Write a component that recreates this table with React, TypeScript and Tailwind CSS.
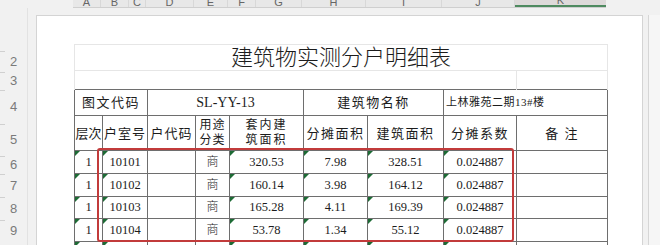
import React from 'react';

const colWidths = [28, 45, 48, 34, 74, 64, 76, 73, 91];

const letters = [
  { l: 'A', w: 28 },
  { l: 'B', w: 28 },
  { l: 'C', w: 17 },
  { l: 'D', w: 48 },
  { l: 'E', w: 34 },
  { l: 'F', w: 28 },
  { l: 'G', w: 46 },
  { l: 'H', w: 64 },
  { l: 'I', w: 76 },
  { l: 'J', w: 73 },
  { l: 'K', w: 91 },
];

const rowNums = [
  { n: 2, h: 21 },
  { n: 3, h: 18 },
  { n: 4, h: 34 },
  { n: 5, h: 32 },
  { n: 6, h: 18 },
  { n: 7, h: 23 },
  { n: 8, h: 23 },
  { n: 9, h: 22 },
];

const data = [
  { h: 23, cells: ['1', '10101', '', '商', '320.53', '7.98', '328.51', '0.024887', ''] },
  { h: 23, cells: ['1', '10102', '', '商', '160.14', '3.98', '164.12', '0.024887', ''] },
  { h: 22, cells: ['1', '10103', '', '商', '165.28', '4.11', '169.39', '0.024887', ''] },
  { h: 23, cells: ['1', '10104', '', '商', '53.78', '1.34', '55.12', '0.024887', ''] },
  { h: 23, cells: ['', '', '', '', '', '', '', '', ''] },
];

// columns whose cells carry the green "number stored as text" corner mark
const marked = [0, 1, 4, 5, 6, 7];

const cjk = "font-['Liberation_Serif','Noto_Sans_CJK_SC',serif]";

function Mark() {
  return (
    <span className="absolute left-0 top-0 h-0 w-0 border-t-[5px] border-r-[5px] border-t-[#1d6b35] border-r-transparent" />
  );
}

export default function App() {
  return (
    <div className="relative flex h-[245px] w-[660px] flex-col overflow-hidden bg-[#f1f1f1] text-[#1c1c1c]">
      {/* column letters */}
      <div className="flex h-[8px] shrink-0">
        <div className="w-[73px] shrink-0" />
        <div className="flex h-[8px] border-b border-[#cfcfcf] bg-[#e8e8e8]">
          {letters.map((c) => (
            <div
              key={c.l}
              style={{ width: c.w }}
              className={
                c.l === 'K'
                  ? "flex h-[7px] items-end justify-center overflow-hidden border-b-2 border-[#4f8a60] bg-[#dedada] font-['Liberation_Sans',sans-serif] text-[11px] leading-[9px] text-[#666]"
                  : "flex h-[7px] items-end justify-center overflow-hidden border-r border-[#d8d8d8] font-['Liberation_Sans',sans-serif] text-[11px] leading-[9px] text-[#666]"
              }
            >
              {c.l}
            </div>
          ))}
        </div>
      </div>

      <div className="flex min-h-0 flex-1">
        {/* row numbers */}
        <div className="flex w-[36px] shrink-0">
          <div className="flex w-[28px] flex-col border-r border-[#e2e2e2] pt-[43px]">
            {rowNums.map((r) => (
              <div
                key={r.n}
                style={{ height: r.h }}
                className="relative flex shrink-0 items-center justify-center font-['Liberation_Sans',sans-serif] text-[13px] text-[#7a7a7a]"
              >
                <span className="absolute left-0 top-0 h-px w-[5px] bg-[#d0d0d0]" />
                {r.n}
              </div>
            ))}
          </div>
        </div>

        {/* page */}
        <div className="mt-[7px] w-[607px] shrink-0 border-l border-t border-r border-[#d4d4d4] bg-white pl-[37px] pt-[28px]">
          <div className="relative w-[533px]">
            <table className="w-[533px] table-fixed border-collapse whitespace-nowrap">
              <colgroup>
                {colWidths.map((w, i) => (
                  <col key={i} style={{ width: w }} />
                ))}
              </colgroup>
              <tbody>
                <tr>
                  <td
                    colSpan={9}
                    className={`h-[25px] border border-b-0 border-[#e6e6e6] p-0 text-center text-[22px] leading-[25px] font-light ${cjk}`}
                  >
                    建筑物实测分户明细表
                  </td>
                </tr>
                <tr>
                  <td colSpan={8} className="h-[19px] border border-b-0 border-[#e6e6e6] p-0" />
                  <td className="h-[19px] border border-b-0 border-[#e6e6e6] p-0" />
                </tr>
                <tr className={`text-[13px] leading-[15px] ${cjk}`}>
                  <td colSpan={2} className="h-[26px] border border-[#6e6e6e] p-0 text-center tracking-[1.5px]">
                    图文代码
                  </td>
                  <td colSpan={3} className="border border-[#6e6e6e] p-0 text-center font-['Liberation_Serif',serif] text-[14px]">
                    SL-YY-13
                  </td>
                  <td colSpan={2} className="border border-[#6e6e6e] p-0 text-center tracking-[1.5px]">
                    建筑物名称
                  </td>
                  <td colSpan={2} className="border border-[#6e6e6e] p-0 pl-[2px] text-left text-[11px] tracking-[0.5px]">
                    上林雅苑二期13#楼
                  </td>
                </tr>
                <tr className={`text-[13px] leading-[15px] ${cjk}`}>
                  <td className="h-[35px] overflow-hidden border border-[#6e6e6e] p-0 text-center tracking-[0px]">层次</td>
                  <td className="border border-[#6e6e6e] p-0 text-center tracking-[1px]">户室号</td>
                  <td className="border border-[#6e6e6e] p-0 text-center tracking-[1px]">户代码</td>
                  <td className="border border-[#6e6e6e] p-0 text-center text-[12px] leading-[15px] tracking-[1px]">
                    用途
                    <br />
                    分类
                  </td>
                  <td className="border border-[#6e6e6e] p-0 text-center text-[12px] leading-[15px] tracking-[2px]">
                    套内建
                    <br />
                    筑面积
                  </td>
                  <td className="border border-[#6e6e6e] p-0 text-center tracking-[1.5px]">分摊面积</td>
                  <td className="border border-[#6e6e6e] p-0 text-center tracking-[1.5px]">建筑面积</td>
                  <td className="border border-[#6e6e6e] p-0 text-center tracking-[1.5px]">分摊系数</td>
                  <td className="border border-[#6e6e6e] p-0 text-center tracking-[1.5px]">备 注</td>
                </tr>
                {data.map((row, ri) => (
                  <tr key={ri} className="font-['Liberation_Serif','Noto_Sans_CJK_SC',serif] text-[12.5px] leading-[15px]">
                    {row.cells.map((c, ci) => (
                      <td
                        key={ci}
                        style={{ height: row.h }}
                        className={
                          ci === 3
                            ? 'relative border border-[#6e6e6e] p-0 text-center text-[12px] font-light'
                            : 'relative border border-[#6e6e6e] p-0 text-center'
                        }
                      >
                        {marked.includes(ci) && <Mark />}
                        {c}
                      </td>
                    ))}
                  </tr>
                ))}
              </tbody>
            </table>

            {/* red highlight box */}
            <div className="pointer-events-none absolute left-[23px] top-[104px] h-[94px] w-[417px] rounded-[3px] border-2 border-[#c23b3b]" />
          </div>
        </div>

        {/* right edge */}
        <div className="w-[5px] shrink-0" />
        <div className="mt-[7px] flex-1 border-l border-[#d6d6d6] bg-[#f6f6f6]" />
      </div>
    </div>
  );
}
